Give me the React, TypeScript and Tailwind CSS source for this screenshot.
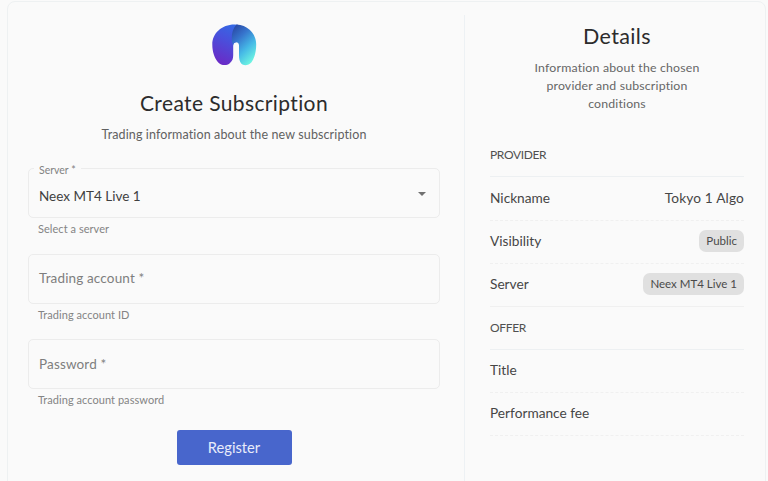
import clsx from "clsx";
import type { ReactNode } from "react";

type FieldProps = {
  label: string;
  helper: string;
  value?: string;
  select?: boolean;
};

type DetailRowProps = {
  label: string;
  solid?: boolean;
  children?: ReactNode;
};

function Logo() {
  return (
    <svg aria-hidden className="h-[42px] w-[46px]" viewBox="0 0 46 42">
      <defs>
        <linearGradient id="logo-left" x1="0.75" x2="0.45" y1="0" y2="1">
          <stop offset="0" stopColor="#3568e4" />
          <stop offset="0.4" stopColor="#4950dc" />
          <stop offset="1" stopColor="#6a2bc6" />
        </linearGradient>
        <linearGradient id="logo-right" x1="0.1" x2="0.65" y1="0.05" y2="1">
          <stop offset="0" stopColor="#2a4aa6" />
          <stop offset="0.3" stopColor="#3673cc" />
          <stop offset="0.65" stopColor="#45b8e6" />
          <stop offset="1" stopColor="#6cf3e2" />
        </linearGradient>
      </defs>
      <path
        d="M23.500 .5C10.500 .5 1.300 9.500 1.300 20.500C1.300 28 3.500 34 7 38.200C10 41.600 15.500 42 18.500 39.500C21.500 37 22.200 34.500 22.200 31V21.500C22.200 19.500 23.500 18.200 25.300 18.200L27 .8Q25.500 .5 23.500 .5Z"
        fill="url(#logo-left)"
      />
      <path
        d="M25.500 .6C37 1.200 45.200 10 45.200 20.500C45.200 28 43.500 34 40.500 38.200C37.500 41.800 32.500 42 30.200 39.500C28.500 37.500 28 34.500 28 31V21.500C28 17.300 22.200 17.300 22.200 21.500C20 17 19.700 6.500 25.500 .6Z"
        fill="url(#logo-right)"
      />
    </svg>
  );
}

function Field({ label, helper, value, select }: FieldProps) {
  return (
    <div className="h-[85.500px]">
      <div className="relative flex h-[50px] items-center justify-between rounded-[5px] border border-[#ececec] pr-[13px] pl-[10px]">
        {value ? (
          <>
            <span className="absolute -top-[5px] left-[5px] bg-[#fafafa] px-[5px] text-[10.500px] leading-[12px] text-[#828282]">
              {label}
            </span>
            <span className="pt-[7px] text-[13.500px] text-[#404040]">{value}</span>
          </>
        ) : (
          <span className="text-[13.500px] tracking-[0.15px] text-[#7e7e7e]">{label}</span>
        )}
        {select ? (
          <svg aria-hidden className="mt-[2px] h-[4px] w-[8px]" viewBox="0 0 8 4">
            <path d="M0 0h8L4 4z" fill="#717171" />
          </svg>
        ) : null}
      </div>
      <p className="pt-[3px] pl-[10px] text-[11px] leading-[16px] tracking-[0.05px] text-[#848484]">
        {helper}
      </p>
    </div>
  );
}

function SectionHeading({ children }: { children: ReactNode }) {
  return (
    <h3 className="flex h-[43px] items-center border-b border-[#edf0f2] pb-px text-[12px] tracking-[-0.35px] text-[#505050]">
      {children}
    </h3>
  );
}

function DetailRow({ label, solid, children }: DetailRowProps) {
  return (
    <div
      className={clsx(
        "flex h-[43px] items-center justify-between border-b border-[#f0f0f0] pb-[2px] text-[13.700px] text-[#464646]",
        !solid && "border-dashed"
      )}
    >
      <span>{label}</span>
      {children}
    </div>
  );
}

function Chip({ children }: { children: ReactNode }) {
  return (
    <span className="flex h-[22px] items-center rounded-[7px] bg-[#e0e0e0] px-[7px] text-[11.500px] text-[#4a4a4a]">
      {children}
    </span>
  );
}

export default function App() {
  return (
    <div className="h-[481px] overflow-hidden bg-[#fafafa] pt-px pl-[7px] font-['Lato',sans-serif] [font-variant-ligatures:none]">
      <main className="flex h-[500px] w-[759px] rounded-[8px] border border-[#eef1f2] bg-[#fafafa]">
        <section className="w-[456px] pt-[22px] pr-[24px] pl-[20px]">
          <div className="flex flex-col items-center">
            <Logo />
            <h1 className="mt-[22px] text-[21px] leading-[30px] tracking-[0.38px] text-[#2c2c2c]">
              Create Subscription
            </h1>
            <p className="mt-[8px] text-[12.500px] leading-[18px] tracking-[0.12px] text-[#616161]">
              Trading information about the new subscription
            </p>
          </div>
          <form className="mt-[24px]">
            <Field helper="Select a server" label="Server *" select value="Neex MT4 Live 1" />
            <Field helper="Trading account ID" label="Trading account *" />
            <Field helper="Trading account password" label="Password *" />
            <button
              className="mx-auto mt-[5px] block h-[35px] w-[115px] rounded-[3px] bg-[#4866cc] text-[14.700px] text-[#e8ecfa]"
              type="button"
            >
              Register
            </button>
          </form>
        </section>
        <aside className="mt-[13px] flex-1 border-l border-[#edf1f4] pr-[21px] pl-[25px]">
          <h2 className="mt-[6px] text-center text-[21.500px] leading-[30px] tracking-[0.35px] text-[#2c2c2c]">
            Details
          </h2>
          <p className="mx-auto mt-[8px] w-[180px] text-center text-[12.300px] leading-[18px] tracking-[0.18px] text-[#666]">
            Information about the chosen provider and subscription conditions
          </p>
          <div className="mt-[21px]">
            <SectionHeading>PROVIDER</SectionHeading>
            <div className="pt-px">
              <DetailRow label="Nickname">
                <span className="tracking-[0.15px]">Tokyo 1 Algo</span>
              </DetailRow>
            </div>
            <DetailRow label="Visibility">
              <Chip>Public</Chip>
            </DetailRow>
            <DetailRow label="Server" solid>
              <Chip>Neex MT4 Live 1</Chip>
            </DetailRow>
            <SectionHeading>OFFER</SectionHeading>
            <DetailRow label="Title" />
            <DetailRow label="Performance fee" />
          </div>
        </aside>
      </main>
    </div>
  );
}
